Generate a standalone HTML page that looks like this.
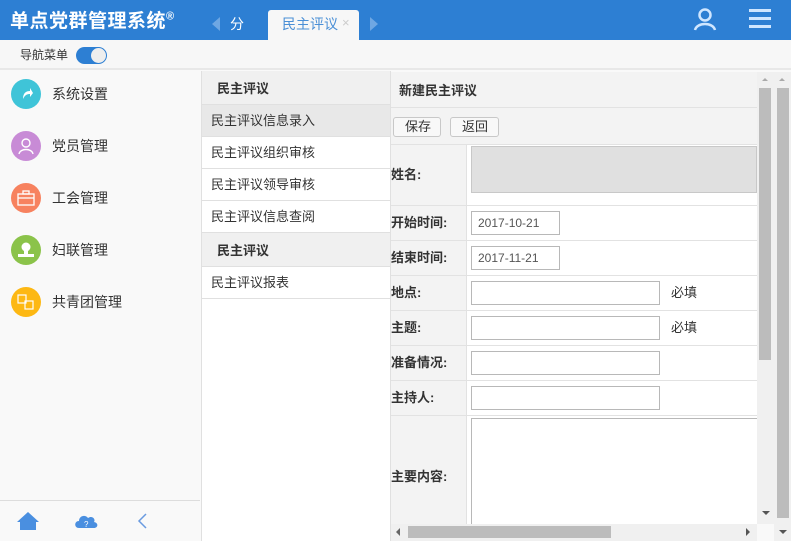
<!DOCTYPE html>
<html><head><meta charset="utf-8"><style>
*{margin:0;padding:0;box-sizing:border-box}
body{width:791px;height:541px;overflow:hidden;position:relative;background:#f9f9f9;font-family:"Liberation Sans","Noto Sans CJK SC",sans-serif;font-size:13px;color:#333}
.abs{position:absolute}
#hd{left:0;top:0;width:791px;height:40px;background:#2d7fd3}
#title{left:10px;top:6px;color:#fff;font-size:19px;font-weight:bold;letter-spacing:0.5px}
#title sup{font-size:11px}
.tab{color:#fff;font-size:14px}
#sub{left:0;top:40px;width:791px;height:30px;background:#f7f7f7;border-bottom:2px solid #e8e8e8}
.nav{left:0;width:200px;height:52px}
.ic{position:absolute;left:11px;top:8px;width:30px;height:30px;border-radius:50%}
.nav span{position:absolute;left:52px;top:13px;font-size:14px;color:#333}
#mid{left:201px;top:71px;width:190px;height:470px;background:#fff;border-left:1px solid #e0e0e0;border-right:1px solid #e0e0e0}
.mh{height:34px;background:#f0f0f0;font-weight:bold;padding:7px 0 0 15px;border-bottom:1px solid #e0e0e0}
.mi{height:32px;padding:5px 0 0 9px;border-bottom:1px solid #e0e0e0}
#form{left:391px;top:72px;width:366px;height:452px;background:#f3f3f3;overflow:hidden}
.row{position:absolute;left:0;width:366px;border-top:1px solid #e2e2e2}
.lab{position:absolute;left:0;font-weight:bold;font-size:13px}
.val{position:absolute;left:75px;right:0;top:0;bottom:0;background:#fff;border-left:1px solid #e2e2e2}
.inp{position:absolute;left:4px;height:24px;border:1px solid #b8b8b8;background:#fff;font-size:12px;padding:4px 6px;color:#555}
.btn{position:absolute;top:45px;height:20px;border:1px solid #c8c8c8;border-radius:3px;background:#f8f8f8;font-size:13px;padding:0 0 0 11px;line-height:18px}
.sb{background:#f0f0f0}
.th{background:#bcbcbc}
</style></head><body>
<div id="hd" class="abs"></div>
<div id="title" class="abs">单点党群管理系统<sup>®</sup></div>
<div class="abs" style="left:212px;top:17px;width:0;height:0;border-top:7px solid transparent;border-bottom:7px solid transparent;border-right:8px solid #6ea7e3"></div>
<div class="abs tab" style="left:230px;top:14px">分</div>
<div class="abs" style="left:268px;top:10px;width:91px;height:30px;background:#f7f7f7;border-radius:3px 3px 0 0"></div>
<div class="abs" style="left:282px;top:14px;font-size:14px;color:#4a8fd6">民主评议</div>
<div class="abs" style="left:342px;top:15px;font-size:13px;color:#ccc">×</div>
<div class="abs" style="left:370px;top:17px;width:0;height:0;border-top:7px solid transparent;border-bottom:7px solid transparent;border-left:8px solid #6ea7e3"></div>
<svg class="abs" style="left:693px;top:7px" width="24" height="24" viewBox="0 0 24 24"><circle cx="12" cy="8" r="5.5" fill="none" stroke="#cfe6ff" stroke-width="2.5"/><path d="M2 23 C4 15 20 15 22 23" fill="none" stroke="#cfe6ff" stroke-width="2.5"/></svg>
<div class="abs" style="left:749px;top:9px;width:22px;height:3px;background:#cfe6ff;box-shadow:0 8px 0 #cfe6ff,0 16px 0 #cfe6ff"></div>
<div id="sub" class="abs"></div>
<div class="abs" style="left:20px;top:46px;font-size:12px;color:#333">导航菜单</div>
<div class="abs" style="left:76px;top:47px;width:31px;height:17px;border-radius:9px;background:#2d7fd3"></div>
<div class="abs" style="left:91px;top:48px;width:15px;height:15px;border-radius:50%;background:#eee"></div>

<div class="abs nav" style="top:71px"><div class="ic" style="background:#3fc4d8"></div><svg class="abs" style="left:20px;top:16px" width="14" height="14"><path d="M3 12 C3 6 6 4 10 4 L10 1 L13 6 L10 10 L10 7 C7 7 5 8 3 12Z" fill="#fff"/></svg><span>系统设置</span></div>
<div class="abs nav" style="top:123px"><div class="ic" style="background:#c88bd6"></div><svg class="abs" style="left:18px;top:14px" width="16" height="18"><circle cx="8" cy="6" r="4" fill="none" stroke="#fff" stroke-width="1.4"/><path d="M1 17 C2 11 14 11 15 17" fill="none" stroke="#fff" stroke-width="1.4"/></svg><span>党员管理</span></div>
<div class="abs nav" style="top:175px"><div class="ic" style="background:#f7825f"></div><svg class="abs" style="left:17px;top:15px" width="18" height="16"><rect x="1" y="4" width="16" height="11" fill="none" stroke="#fff" stroke-width="1.3"/><rect x="6" y="1" width="6" height="3" fill="none" stroke="#fff" stroke-width="1.3"/><line x1="1" y1="8" x2="17" y2="8" stroke="#fff" stroke-width="1.3"/></svg><span>工会管理</span></div>
<div class="abs nav" style="top:227px"><div class="ic" style="background:#8bc34a"></div><svg class="abs" style="left:16px;top:14px" width="20" height="18"><circle cx="10" cy="6" r="4.5" fill="#fff"/><rect x="8" y="9" width="4" height="5" fill="#fff"/><rect x="2" y="13" width="16" height="3" fill="#fff"/></svg><span>妇联管理</span></div>
<div class="abs nav" style="top:279px"><div class="ic" style="background:#fdb813"></div><svg class="abs" style="left:17px;top:15px" width="18" height="16"><rect x="1" y="1" width="8" height="8" fill="none" stroke="#fff" stroke-width="1.2"/><rect x="8" y="7" width="8" height="8" fill="none" stroke="#fff" stroke-width="1.2"/></svg><span>共青团管理</span></div>

<div class="abs" style="left:0;top:500px;width:200px;height:1px;background:#ddd"></div>
<svg class="abs" style="left:16px;top:511px" width="24" height="20"><path d="M12 1 L1 11 L4 11 L4 19 L20 19 L20 11 L23 11Z" fill="#4a8fe0"/></svg>
<svg class="abs" style="left:74px;top:513px" width="25" height="16"><path d="M5 15 C0 15 0 8 5 8 C5 3 11 1 14 5 C18 2 22 6 20 9 C25 10 24 15 20 15Z" fill="#4a8fe0"/><text x="10" y="14" font-size="8" fill="#fff" font-family="Liberation Sans">?</text></svg>
<svg class="abs" style="left:136px;top:512px" width="12" height="18"><path d="M10 2 L3 9 L10 16" fill="none" stroke="#6a9be0" stroke-width="1.5"/></svg>

<div id="mid" class="abs">
<div class="mh">民主评议</div>
<div class="mi" style="background:#e8e8e8">民主评议信息录入</div>
<div class="mi">民主评议组织审核</div>
<div class="mi">民主评议领导审核</div>
<div class="mi">民主评议信息查阅</div>
<div class="mh">民主评议</div>
<div class="mi">民主评议报表</div>
</div>

<div id="form" class="abs">
<div class="abs" style="left:8px;top:8px;font-weight:bold">新建民主评议</div>
<div class="abs" style="left:0;top:35px;width:366px;border-top:1px solid #e2e2e2"></div>
<div class="btn" style="left:2px;width:48px">保存</div>
<div class="btn" style="left:59px;width:49px">返回</div>
<div class="row" style="top:72px;height:66px"><div class="lab" style="top:19px">姓名:</div><div class="val"><div class="abs" style="left:4px;top:1px;right:0;height:47px;background:#e0e0e0;border:1px solid #c8c8c8"></div></div></div>
<div class="row" style="top:133px;height:35px"><div class="lab" style="top:6px">开始时间:</div><div class="val"><div class="inp" style="top:5px;width:89px">2017-10-21</div></div></div>
<div class="row" style="top:168px;height:35px"><div class="lab" style="top:6px">结束时间:</div><div class="val"><div class="inp" style="top:5px;width:89px">2017-11-21</div></div></div>
<div class="row" style="top:203px;height:35px"><div class="lab" style="top:6px">地点:</div><div class="val"><div class="inp" style="top:5px;width:189px"></div><div class="abs" style="left:204px;top:6px">必填</div></div></div>
<div class="row" style="top:238px;height:35px"><div class="lab" style="top:6px">主题:</div><div class="val"><div class="inp" style="top:5px;width:189px"></div><div class="abs" style="left:204px;top:6px">必填</div></div></div>
<div class="row" style="top:273px;height:35px"><div class="lab" style="top:6px">准备情况:</div><div class="val"><div class="inp" style="top:5px;width:189px"></div></div></div>
<div class="row" style="top:308px;height:35px"><div class="lab" style="top:6px">主持人:</div><div class="val"><div class="inp" style="top:5px;width:189px"></div></div></div>
<div class="row" style="top:343px;height:120px"><div class="lab" style="top:50px">主要内容:</div><div class="val"><div class="abs" style="left:4px;top:2px;right:0;height:120px;border:1px solid #b8b8b8;border-right:none"></div></div></div>
</div>

<div class="abs sb" style="left:757px;top:72px;width:17px;height:452px"></div>
<div class="abs th" style="left:759px;top:88px;width:12px;height:272px"></div>
<div class="abs sb" style="left:774px;top:72px;width:17px;height:469px"></div>
<div class="abs th" style="left:777px;top:88px;width:12px;height:430px"></div>
<div class="abs sb" style="left:391px;top:524px;width:366px;height:17px"></div>
<div class="abs th" style="left:408px;top:526px;width:203px;height:12px"></div>
<div class="abs" style="left:396px;top:528px;border-top:4px solid transparent;border-bottom:4px solid transparent;border-right:4px solid #666"></div>
<div class="abs" style="left:746px;top:528px;border-top:4px solid transparent;border-bottom:4px solid transparent;border-left:4px solid #555"></div>
<div class="abs" style="left:762px;top:511px;border-left:4px solid transparent;border-right:4px solid transparent;border-top:4px solid #555"></div>
<div class="abs" style="left:779px;top:530px;border-left:4px solid transparent;border-right:4px solid transparent;border-top:4px solid #555"></div>
<div class="abs" style="left:762px;top:78px;border-left:3px solid transparent;border-right:3px solid transparent;border-bottom:3px solid #aaa"></div>
<div class="abs" style="left:779px;top:78px;border-left:3px solid transparent;border-right:3px solid transparent;border-bottom:3px solid #aaa"></div>
</body></html>
